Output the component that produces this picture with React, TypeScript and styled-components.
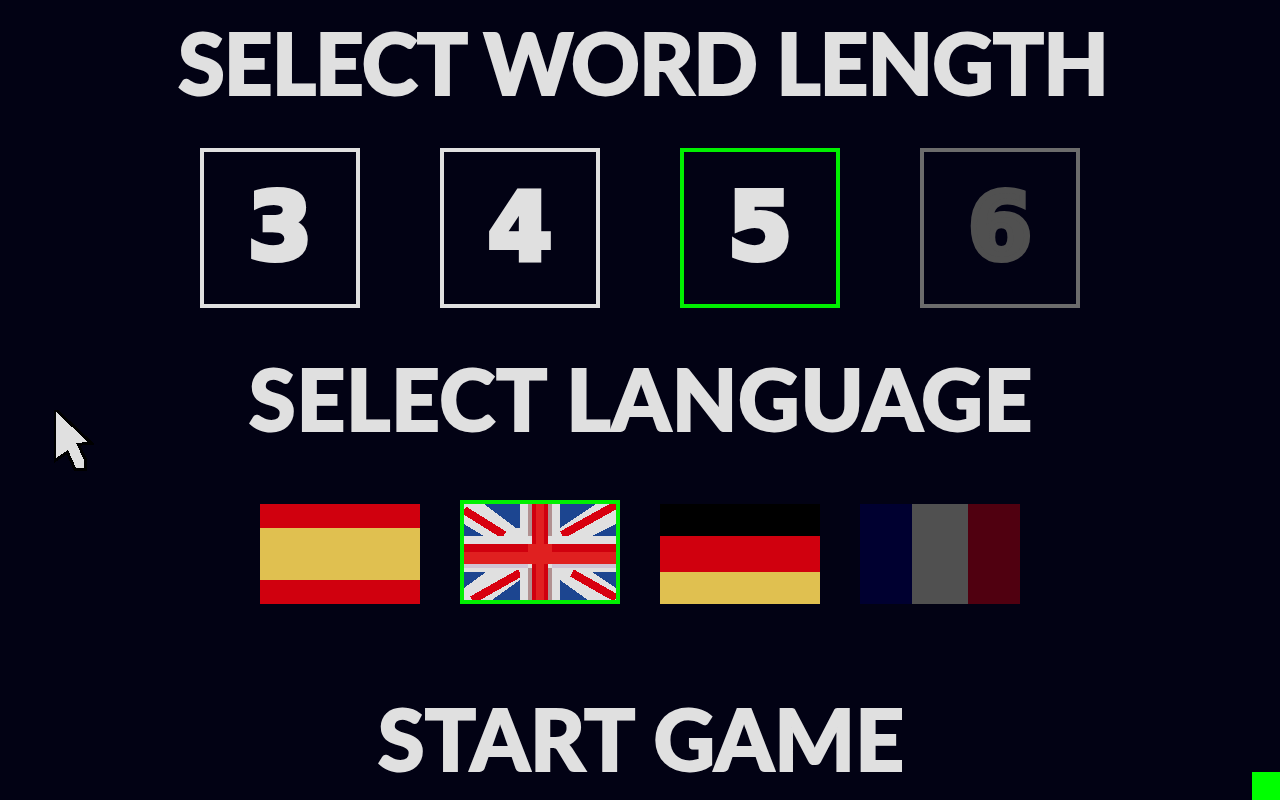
import styled, { createGlobalStyle } from 'styled-components'

const LENGTHS = [
  { value: 3, state: 'normal' },
  { value: 4, state: 'normal' },
  { value: 5, state: 'selected' },
  { value: 6, state: 'disabled' },
] as const

const LANGUAGES = [
  { code: 'es', stripes: ['#d0000e 24px', '#e0c050 52px', '#d0000e 24px'], vertical: false },
  { code: 'de', stripes: ['#000000 32px', '#d0000e 36px', '#e0c050 32px'], vertical: false },
  { code: 'fr', stripes: ['#000030 52px', '#505050 56px', '#500010 52px'], vertical: true },
]

function UnionJack() {
  return (
    <svg width="152" height="96" viewBox="0 0 152 96" shapeRendering="crispEdges">
      <rect width="152" height="96" fill="#e0e0e0" />
      {/* blue corners */}
      <g fill="#1c4590">
        <polygon points="20,0 56,0 56,24 52,24" />
        <polygon points="0,20 20,32 0,32" />
        <polygon points="96,0 132,0 96,24" />
        <polygon points="152,20 128,32 152,32" />
        <polygon points="0,68 22,68 0,84" />
        <polygon points="56,76 28,96 56,96" />
        <polygon points="96,76 124,96 96,96" />
        <polygon points="128,68 152,68 152,84" />
      </g>
      {/* red diagonals */}
      <g stroke="#d8000f" strokeWidth="8">
        <line x1="0" y1="6" x2="40" y2="31" />
        <line x1="152" y1="1" x2="98" y2="31" />
        <line x1="56" y1="69" x2="8" y2="96" />
        <line x1="108" y1="69" x2="152" y2="94" />
      </g>
      {/* shaded edges of the white cross */}
      <rect x="56" width="8" height="32" fill="#e0e0e0" />
      <rect x="88" width="8" height="32" fill="#e0e0e0" />
      <rect x="56" y="68" width="8" height="28" fill="#e0e0e0" />
      <rect x="88" y="68" width="8" height="28" fill="#e0e0e0" />
      <rect x="64" width="4" height="32" fill="#b09090" />
      <rect x="84" width="4" height="32" fill="#b09090" />
      <rect x="64" y="64" width="4" height="32" fill="#b09090" />
      <rect x="84" y="64" width="4" height="32" fill="#b09090" />
      <rect y="32" width="152" height="32" fill="#e0e0e0" />
      <rect y="60" width="64" height="4" fill="#d0c4d4" />
      <rect x="88" y="60" width="64" height="4" fill="#d0c4d4" />
      {/* red cross */}
      <rect x="68" width="16" height="96" fill="#d0000e" />
      <rect x="72" width="8" height="96" fill="#e02020" />
      <rect y="40" width="152" height="8" fill="#d0000e" />
      <rect y="48" width="152" height="12" fill="#e02020" />
      <rect x="64" y="40" width="24" height="20" fill="#e02020" />
    </svg>
  )
}

function Cursor() {
  return (
    <svg width="40" height="64" viewBox="0 0 40 64" shapeRendering="crispEdges">
      <polygon
        points="2,2 34,32 22,33 30,50 30,58 22,58 14,40 2,48"
        fill="#000000"
        stroke="#000000"
        strokeWidth="6"
      />
      <polygon points="2,2 34,32 22,33 30,50 30,58 22,58 14,40 2,48" fill="#e0e0e0" />
    </svg>
  )
}

export default function App() {
  return (
    <>
      <GlobalStyle />
      <Page>
        <TitleHeading $spacing={-0.95}>SELECT WORD LENGTH</TitleHeading>
        <LengthRow>
          {LENGTHS.map((item) => (
            <LengthBox key={item.value} $state={item.state}>
              {item.value}
            </LengthBox>
          ))}
        </LengthRow>

        <LanguageHeading $spacing={0.7}>SELECT LANGUAGE</LanguageHeading>
        <FlagRow>
          <StripedFlag {...stripeProps(LANGUAGES[0])} />
          <SelectedFlag>
            <UnionJack />
          </SelectedFlag>
          <StripedFlag {...stripeProps(LANGUAGES[1])} />
          <StripedFlag {...stripeProps(LANGUAGES[2])} />
        </FlagRow>

        <StartHeading $spacing={0.2}>START GAME</StartHeading>

        <Pointer>
          <Cursor />
        </Pointer>
        <Indicator />
      </Page>
    </>
  )
}

function stripeProps(lang: { stripes: string[]; vertical: boolean }) {
  return { $stripes: lang.stripes, $vertical: lang.vertical }
}

// styles
const GlobalStyle = createGlobalStyle`
  html, body {
    margin: 0;
    padding: 0;
    background-color: #020214;
  }
`

const Page = styled.div`
  position: relative;
  width: 1280px;
  height: 800px;
  overflow: hidden;
  display: flex;
  flex-direction: column;
  align-items: center;
  padding-top: 14px;
  box-sizing: border-box;
  background-color: #020214;
  color: #e0e0e0;
  font-family: "Lato", "Liberation Sans", sans-serif;
`

const Heading = styled.h1<{ $spacing: number }>`
  margin: 0;
  padding-left: 2px;
  height: 96px;
  line-height: 96px;
  font-size: 85px;
  font-weight: 900;
  letter-spacing: ${({ $spacing }) => $spacing}px;
  -webkit-text-stroke: 2px #e0e0e0;
  white-space: nowrap;
`

const TitleHeading = styled(Heading)`
  padding-left: 6px;
`

const LanguageHeading = styled(Heading)`
  margin-top: 42px;
`

const StartHeading = styled(Heading)`
  margin-top: 86px;
`

const LengthRow = styled.div`
  display: flex;
  gap: 80px;
  margin-top: 38px;
`

const LengthBox = styled.div<{ $state: 'normal' | 'selected' | 'disabled' }>`
  display: flex;
  align-items: center;
  justify-content: center;
  box-sizing: border-box;
  width: 160px;
  height: 160px;
  font-family: "DejaVu Sans", sans-serif;
  font-weight: 700;
  font-size: 92px;
  line-height: 1;
  color: ${({ $state }) => ($state === 'disabled' ? '#505050' : '#e0e0e0')};
  -webkit-text-stroke: 6px currentColor;
  border: 4px solid
    ${({ $state }) =>
      $state === 'selected' ? '#00f000' : $state === 'disabled' ? '#6c6c6c' : '#e0e0e0'};
`

const FlagRow = styled.div`
  display: flex;
  align-items: flex-start;
  gap: 40px;
  margin-top: 54px;
`

const StripedFlag = styled.div<{ $stripes: string[]; $vertical: boolean }>`
  display: grid;
  margin-top: 4px;
  width: 160px;
  height: 100px;
  background: ${({ $stripes, $vertical }) => {
    let pos = 0
    const stops = $stripes.map((s) => {
      const [color, size] = s.split(' ')
      const from = pos
      pos += parseInt(size, 10)
      return `${color} ${from}px ${pos}px`
    })
    return `linear-gradient(${$vertical ? 'to right' : 'to bottom'}, ${stops.join(', ')})`
  }};
`

const SelectedFlag = styled.div`
  display: flex;
  width: 160px;
  height: 104px;
  box-sizing: border-box;
  border: 4px solid #00f000;

  svg {
    display: block;
  }
`

const Pointer = styled.div`
  position: absolute;
  left: 54px;
  top: 410px;
`

const Indicator = styled.div`
  position: absolute;
  right: 0;
  bottom: 0;
  width: 28px;
  height: 28px;
  background-color: #00ff00;
`
